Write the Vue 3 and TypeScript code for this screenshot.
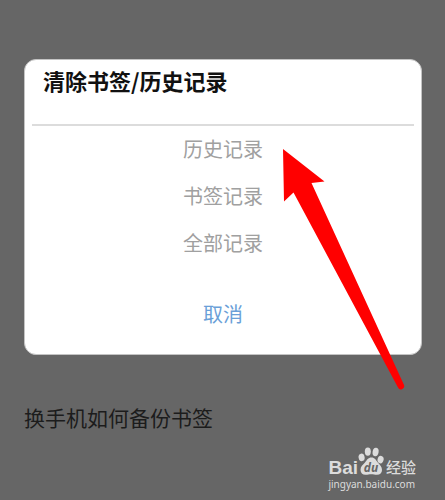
<script setup lang="ts">
import { ref } from 'vue'

interface ClearOption {
  id: string
  label: string
}

const options: ClearOption[] = [
  { id: 'history', label: '历史记录' },
  { id: 'bookmarks', label: '书签记录' },
  { id: 'all', label: '全部记录' },
]

const selected = ref<string | null>(null)

function choose(id: string): void {
  selected.value = id
}

function cancel(): void {
  selected.value = null
}
</script>

<template>
  <main class="page">
    <section class="dialog" role="dialog" aria-labelledby="dialog-title">
      <h1 id="dialog-title" class="title">清除书签/历史记录</h1>
      <ul class="options">
        <li v-for="option in options" :key="option.id">
          <button type="button" class="option" @click="choose(option.id)">{{ option.label }}</button>
        </li>
      </ul>
      <button type="button" class="option cancel" @click="cancel">取消</button>
    </section>

    <p class="question">换手机如何备份书签</p>

    <svg class="pointer" viewBox="0 0 122 242" aria-hidden="true">
      <path
        d="M0 0 L41.5 32.5 L28.5 34 L120.8 235.5 A3.2 3.2 0 0 1 115 238.5 L10.5 43.5 L1 52.5 Z"
        fill="#ff0000"
      />
    </svg>

    <footer class="brand">
      <div class="logo">
        <span class="latin">Bai</span>
        <svg class="paw" viewBox="0 0 26 28" aria-hidden="true">
          <g fill="#dcdcdc">
            <ellipse cx="3.6" cy="10.4" rx="3" ry="3.8" transform="rotate(-12 3.6 10.4)" />
            <ellipse cx="9.8" cy="4.6" rx="3" ry="4.2" />
            <ellipse cx="17.6" cy="5" rx="3" ry="4.2" transform="rotate(10 17.6 5)" />
            <ellipse cx="22.6" cy="12.6" rx="3" ry="3.8" transform="rotate(14 22.6 12.6)" />
            <path
              d="M13.5 10.5 C16.8 10.5 17.8 13 19.8 15.5 C22 18 24 19.5 24 23 C24 26.2 22 27.8 19 27.8 C16.5 27.8 15.5 27.3 13.3 27.3 C11 27.3 10 27.8 7.5 27.8 C4.4 27.8 2.5 25.8 2.5 22.8 C2.5 19.5 4.8 18 7 15.5 C9 13 10 10.5 13.5 10.5 Z"
            />
          </g>
          <text x="13" y="25" class="du">du</text>
        </svg>
        <span class="chinese">经验</span>
      </div>
      <span class="address">jingyan.baidu.com</span>
    </footer>
  </main>
</template>

<style>
body {
  margin: 0;
  background: #666666;
}
</style>

<style scoped>
.page {
  position: relative;
  box-sizing: border-box;
  min-height: 100vh;
  padding: 59px 23px 0 24px;
  overflow: hidden;
  background: #666666;
  font-family: "Noto Sans CJK SC", sans-serif;
}

.dialog {
  display: flex;
  flex-direction: column;
  box-sizing: border-box;
  padding: 0 7px 16px;
  border: 1px solid #c4c4c4;
  border-radius: 12px;
  background: #ffffff;
}

.title {
  margin: 0;
  padding: 4px 11px 28px;
  border-bottom: 2px solid #dcdcdc;
  color: #111111;
  font-size: 22px;
  font-weight: 700;
  line-height: 32px;
}

.options {
  display: flex;
  flex-direction: column;
  margin: 0;
  padding: 0;
  list-style: none;
}

.option {
  display: block;
  width: 100%;
  height: 47px;
  padding: 0 0 2px;
  border: 0;
  background: none;
  color: #a0a0a0;
  font-family: inherit;
  font-size: 20px;
  font-weight: 400;
  line-height: 44px;
  text-align: center;
  cursor: pointer;
}

.cancel {
  margin-top: 24px;
  color: #6a9fd8;
}

.question {
  margin: 46px 0 0;
  color: #1c1c1c;
  font-size: 21px;
  font-weight: 400;
  line-height: 32px;
}

.pointer {
  position: absolute;
  top: 149px;
  left: 283px;
  width: 122px;
  height: 242px;
  pointer-events: none;
}

.brand {
  position: absolute;
  right: 29px;
  bottom: 9px;
  display: flex;
  flex-direction: column;
  color: #dcdcdc;
}

.logo {
  display: flex;
  align-items: flex-end;
  height: 28px;
  margin-bottom: 3px;
}

.latin {
  font-family: "Liberation Sans", sans-serif;
  font-size: 19px;
  font-weight: 700;
  line-height: 14px;
}

.paw {
  width: 26px;
  height: 28px;
}

.du {
  fill: #666666;
  font-family: "Open Sans", sans-serif;
  font-size: 12px;
  font-style: italic;
  font-weight: 700;
  text-anchor: middle;
}

.chinese {
  margin-left: 2px;
  font-size: 15px;
  font-weight: 500;
  line-height: 16px;
}

.address {
  font-family: "Noto Sans", sans-serif;
  font-size: 10px;
  line-height: 13px;
}
</style>
